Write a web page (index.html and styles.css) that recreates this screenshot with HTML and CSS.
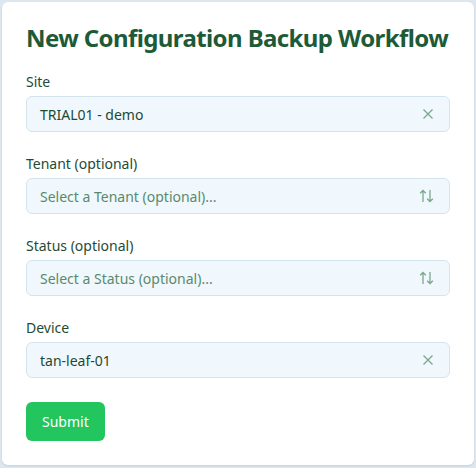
FILE: index.html
```html
<!DOCTYPE html>
<html lang="en">
<head>
  <meta charset="UTF-8">
  <meta name="viewport" content="width=device-width, initial-scale=1.0">
  <title>New Configuration Backup Workflow</title>
  <link rel="stylesheet" href="styles.css">
</head>
<body>
  <div class="card">
    <h1>New Configuration Backup Workflow</h1>

    <form class="workflow-form" onsubmit="return false">
      <div class="field">
        <label>Site</label>
        <div class="select">
          <span class="value">TRIAL01 - demo</span>
          <svg class="icon" width="12" height="12" viewBox="0 0 12 12"><path d="M1.5 1.5l9 9M10.5 1.5l-9 9" stroke="currentColor" stroke-width="1.3" fill="none"/></svg>
        </div>
      </div>

      <div class="field">
        <label>Tenant (optional)</label>
        <div class="select">
          <span class="placeholder">Select a Tenant (optional)...</span>
          <svg class="icon" width="15" height="14" viewBox="0 0 15 14"><path d="M4 13V1.5M1.2 4.3L4 1.5l2.8 2.8M11 1v11.5M8.2 9.7l2.8 2.8 2.8-2.8" stroke="currentColor" stroke-width="1.3" fill="none"/></svg>
        </div>
      </div>

      <div class="field">
        <label>Status (optional)</label>
        <div class="select">
          <span class="placeholder">Select a Status (optional)...</span>
          <svg class="icon" width="15" height="14" viewBox="0 0 15 14"><path d="M4 13V1.5M1.2 4.3L4 1.5l2.8 2.8M11 1v11.5M8.2 9.7l2.8 2.8 2.8-2.8" stroke="currentColor" stroke-width="1.3" fill="none"/></svg>
        </div>
      </div>

      <div class="field">
        <label>Device</label>
        <div class="select">
          <span class="value">tan-leaf-01</span>
          <svg class="icon" width="12" height="12" viewBox="0 0 12 12"><path d="M1.5 1.5l9 9M10.5 1.5l-9 9" stroke="currentColor" stroke-width="1.3" fill="none"/></svg>
        </div>
      </div>

      <button type="submit">Submit</button>
    </form>
  </div>
</body>
</html>
```

FILE: styles.css
```css
body {
  font-family: "Noto Sans", sans-serif;
  margin: 0;
  padding: 2px;
  background-color: #dde7ef;
  height: 468px;
  box-sizing: border-box;
}
.card {
  background-color: #ffffff;
  border-radius: 6px;
  padding: 20px 24px 24px 24px;
  height: 463px;
  box-sizing: border-box;
  box-shadow: 0 1px 2px rgba(120, 150, 170, 0.25);
}
h1 {
  margin: 0 0 18px 0;
  font-size: 24px;
  line-height: 32px;
  font-weight: 700;
  color: #1d5a37;
  letter-spacing: -0.6px;
  white-space: nowrap;
}
.workflow-form {
  display: flex;
  flex-direction: column;
}
.field {
  display: flex;
  flex-direction: column;
  gap: 4px;
  margin-bottom: 22px;
}
label {
  font-size: 14px;
  line-height: 20px;
  color: #1f4b36;
}
.select {
  display: flex;
  align-items: center;
  justify-content: space-between;
  height: 36px;
  box-sizing: border-box;
  padding: 0 15px 0 13px;
  background-color: #f0f8fd;
  border: 1px solid #d5e3ec;
  border-radius: 6px;
  font-size: 14px;
}
.value {
  color: #1c4a33;
}
.placeholder {
  color: #5a8a6c;
}
.icon {
  color: #7aa88b;
}
button {
  align-self: flex-start;
  margin-top: 2px;
  padding: 0 16px;
  height: 39px;
  font-family: inherit;
  font-size: 14px;
  border: none;
  border-radius: 6px;
  background-color: #22c55e;
  color: #ffffff;
  cursor: pointer;
}
button:hover {
  background-color: #16a34a;
}
```
